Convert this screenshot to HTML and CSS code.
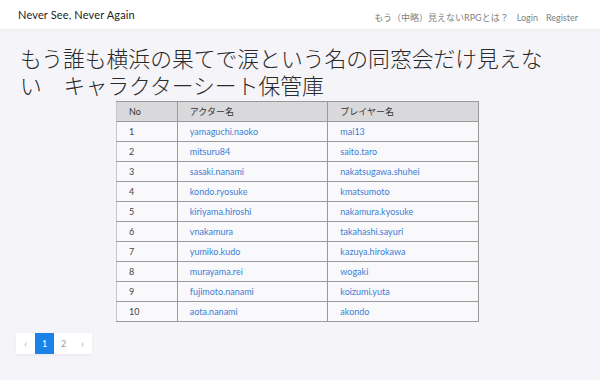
FILE: index.html
```html
<!DOCTYPE html>
<html lang="ja">
<head>
<meta charset="utf-8">
<title>Never See, Never Again</title>
<link rel="stylesheet" href="styles.css">
</head>
<body>
<nav class="navbar">
  <a class="brand" href="#">Never See, Never Again</a>
  <ul class="nav-links">
    <li><a href="#">もう（中略）見えないRPGとは？</a></li>
    <li><a href="#">Login</a></li>
    <li><a href="#">Register</a></li>
  </ul>
</nav>
<main class="content">
  <h1 class="title">もう誰も横浜の果てで涙という名の同窓会だけ見えない　キャラクターシート保管庫</h1>
  <table class="sheet">
    <thead>
      <tr><th class="c-no">No</th><th class="c-name">アクター名</th><th class="c-name">プレイヤー名</th></tr>
    </thead>
    <tbody>
      <tr><td>1</td><td><a href="#">yamaguchi.naoko</a></td><td><a href="#">mai13</a></td></tr>
      <tr><td>2</td><td><a href="#">mitsuru84</a></td><td><a href="#">saito.taro</a></td></tr>
      <tr><td>3</td><td><a href="#">sasaki.nanami</a></td><td><a href="#">nakatsugawa.shuhei</a></td></tr>
      <tr><td>4</td><td><a href="#">kondo.ryosuke</a></td><td><a href="#">kmatsumoto</a></td></tr>
      <tr><td>5</td><td><a href="#">kiriyama.hiroshi</a></td><td><a href="#">nakamura.kyosuke</a></td></tr>
      <tr><td>6</td><td><a href="#">vnakamura</a></td><td><a href="#">takahashi.sayuri</a></td></tr>
      <tr><td>7</td><td><a href="#">yumiko.kudo</a></td><td><a href="#">kazuya.hirokawa</a></td></tr>
      <tr><td>8</td><td><a href="#">murayama.rei</a></td><td><a href="#">wogaki</a></td></tr>
      <tr><td>9</td><td><a href="#">fujimoto.nanami</a></td><td><a href="#">koizumi.yuta</a></td></tr>
      <tr><td>10</td><td><a href="#">aota.nanami</a></td><td><a href="#">akondo</a></td></tr>
    </tbody>
  </table>
  <ul class="pagination">
    <li><a href="#">‹</a></li>
    <li class="active"><a href="#">1</a></li>
    <li><a href="#">2</a></li>
    <li><a href="#">›</a></li>
  </ul>
</main>
</body>
</html>
```
FILE: styles.css
```css
* { box-sizing: border-box; }
html, body { margin: 0; padding: 0; }
body {
  background: #f5f5f9;
  font-family: "Lato", "Noto Sans CJK JP", sans-serif;
  color: #333;
  width: 600px;
  height: 380px;
  overflow: hidden;
}
a { text-decoration: none; }

.navbar {
  height: 29px;
  background: #fff;
  display: flex;
  align-items: center;
  justify-content: space-between;
  padding: 0 22px 0 18px;
  box-shadow: 0 1px 2px rgba(0,0,0,0.04);
}
.brand {
  font-size: 11px;
  color: #222;
  letter-spacing: 0.15px;
}
.nav-links {
  list-style: none;
  margin: 0;
  padding: 0;
  display: flex;
  gap: 8px;
}
.nav-links a {
  font-size: 9px;
  color: #808080;
}

.content {
  padding: 15px 20px 0 20px;
}
.title {
  font-family: "Noto Sans CJK JP", sans-serif;
  font-weight: 300;
  font-size: 21.8px;
  line-height: 27px;
  width: 535px;
  margin: 0 0 3px 0;
  color: #2a2a2a;
}

.sheet {
  border-collapse: collapse;
  width: 363px;
  margin: 0 auto 0 96px;
  font-size: 9px;
  background: #f9f9fb;
}
.sheet th, .sheet td {
  border: 1px solid #9a9a9a;
  height: 20px;
  padding: 0 12px;
  text-align: left;
  font-weight: 400;
  color: #444;
}
.sheet th {
  background: #d9d9db;
  color: #333;
}
.sheet th:first-child, .sheet td:first-child { border-left-color: #c8c8c8; }
.c-no { width: 61px; }
.c-name { width: 151px; }
.sheet td a { color: #3b7dd8; }

.pagination {
  list-style: none;
  display: flex;
  margin: 11px 0 0 -4px;
  padding: 0;
  box-shadow: 0 1px 3px rgba(0,0,0,0.06);
  width: max-content;
}
.pagination a {
  display: flex;
  align-items: center;
  justify-content: center;
  width: 19px;
  height: 21px;
  background: #fff;
  color: #8a99ad;
  font-size: 9px;
}
.pagination .active a {
  background: #1b82e8;
  color: #fff;
}
```
